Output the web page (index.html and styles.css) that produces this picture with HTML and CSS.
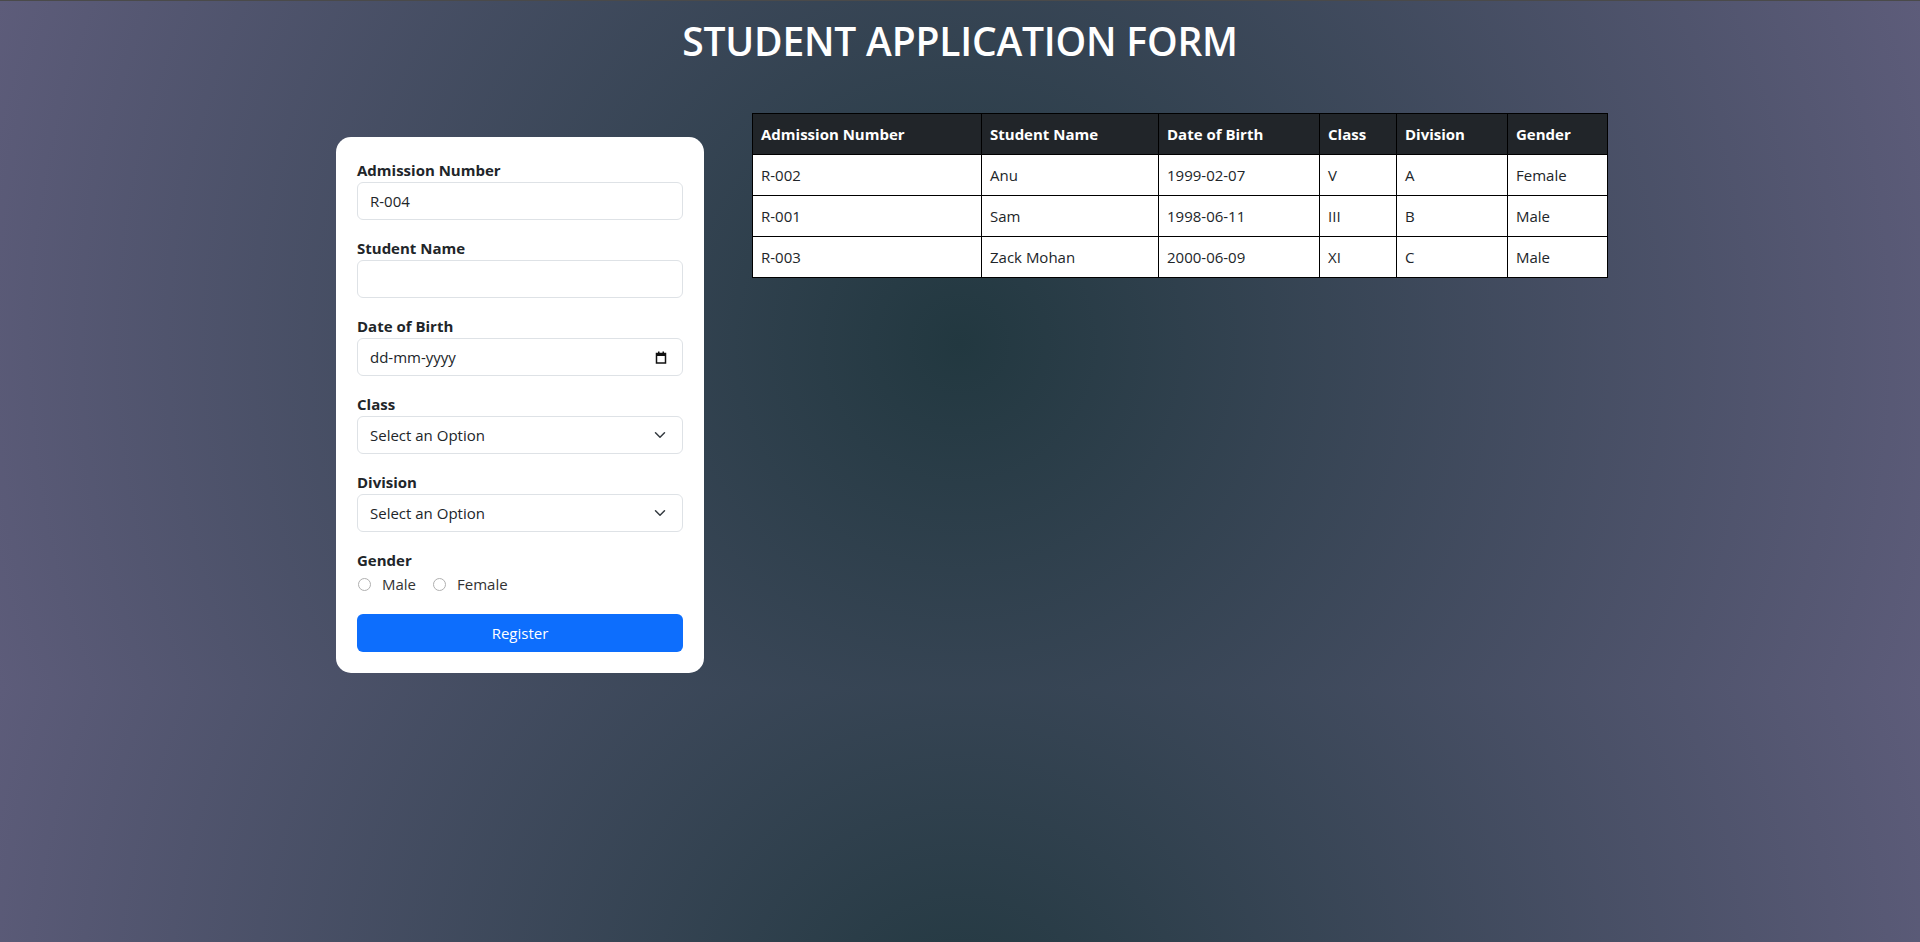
FILE: index.html
```html
<!DOCTYPE html>
<html lang="en">
<head>
<meta charset="utf-8">
<title>Student Application Form</title>
<link rel="stylesheet" href="styles.css">
</head>
<body>
<div class="topline"></div>
<h1 class="title">STUDENT APPLICATION FORM</h1>
<main class="container">
  <section class="col-form">
    <form class="card">
      <div class="field">
        <label class="label">Admission Number</label>
        <div class="control">R-004</div>
      </div>
      <div class="field">
        <label class="label">Student Name</label>
        <div class="control"></div>
      </div>
      <div class="field">
        <label class="label">Date of Birth</label>
        <div class="control control-row">
          <span>dd-mm-yyyy</span>
          <svg class="cal" width="12" height="13" viewBox="0 0 12 13"><rect x="1.5" y="2.5" width="9" height="9.5" fill="none" stroke="#111" stroke-width="1.5"/><rect x="1" y="2" width="10" height="3" fill="#111"/><rect x="3" y="0.5" width="1.5" height="2" fill="#111"/><rect x="7.5" y="0.5" width="1.5" height="2" fill="#111"/></svg>
        </div>
      </div>
      <div class="field">
        <label class="label">Class</label>
        <div class="control control-row">
          <span>Select an Option</span>
          <svg class="chev" width="12" height="8" viewBox="0 0 12 8"><path d="M1.5 1.8 6 6.2l4.5-4.4" fill="none" stroke="#343a40" stroke-width="1.5" stroke-linecap="round" stroke-linejoin="round"/></svg>
        </div>
      </div>
      <div class="field">
        <label class="label">Division</label>
        <div class="control control-row">
          <span>Select an Option</span>
          <svg class="chev" width="12" height="8" viewBox="0 0 12 8"><path d="M1.5 1.8 6 6.2l4.5-4.4" fill="none" stroke="#343a40" stroke-width="1.5" stroke-linecap="round" stroke-linejoin="round"/></svg>
        </div>
      </div>
      <div class="field field-gender">
        <label class="label">Gender</label>
        <div class="radios">
          <span class="radio"><span class="dot"></span>Male</span>
          <span class="radio"><span class="dot"></span>Female</span>
        </div>
      </div>
      <div class="btn">Register</div>
    </form>
  </section>
  <section class="col-table">
    <table class="table">
      <colgroup>
        <col class="c1"><col class="c2"><col class="c3"><col class="c4"><col class="c5"><col class="c6">
      </colgroup>
      <thead>
        <tr><th>Admission Number</th><th>Student Name</th><th>Date of Birth</th><th>Class</th><th>Division</th><th>Gender</th></tr>
      </thead>
      <tbody>
        <tr><td>R-002</td><td>Anu</td><td>1999-02-07</td><td>V</td><td>A</td><td>Female</td></tr>
        <tr><td>R-001</td><td>Sam</td><td>1998-06-11</td><td>III</td><td>B</td><td>Male</td></tr>
        <tr><td>R-003</td><td>Zack Mohan</td><td>2000-06-09</td><td>XI</td><td>C</td><td>Male</td></tr>
      </tbody>
    </table>
  </section>
</main>
</body>
</html>
```
FILE: styles.css
```css
html, body {
  margin: 0;
  padding: 0;
}
body {
  min-height: 100vh;
  font-family: "Open Sans", "Noto Sans", sans-serif;
  font-size: 15px;
  line-height: 24px;
  color: #212529;
  background-color: #3a4455;
  background-image: radial-gradient(circle farthest-corner at 50% 50%, #223840 0%, #5d5c7a 100%);
  background-size: 100% 688px;
  background-repeat: repeat;
}
.topline {
  height: 1px;
  background: #4a4a4a;
}
.title {
  margin: 16px 0 48px;
  text-align: center;
  color: #fff;
  font-size: 39px;
  line-height: 48px;
  font-weight: 600;
  letter-spacing: -0.2px;
}
.container {
  width: 1296px;
  margin: 0 auto;
  display: flex;
  gap: 24px;
  align-items: flex-start;
}
.col-form {
  width: 416px;
  flex: none;
}
.card {
  margin: 24px 24px 0;
  background: #fff;
  border-radius: 15px;
  padding: 21px;
}
.field {
  margin-bottom: 16px;
}
.field-gender {
  margin-bottom: 18px;
}
.label {
  display: block;
  font-weight: 700;
  height: 24px;
}
.control {
  box-sizing: border-box;
  height: 38px;
  border: 1px solid #dee2e6;
  border-radius: 6px;
  padding: 6px 12px;
  background: #fff;
}
.control-row {
  display: flex;
  align-items: center;
  justify-content: space-between;
}
.cal {
  margin-right: 3px;
}
.chev {
  margin-right: 4px;
}
.radios {
  display: flex;
  gap: 16px;
  height: 24px;
  align-items: center;
  color: #333;
}
.radio {
  display: flex;
  align-items: center;
  gap: 11px;
  margin-left: 1px;
}
.dot {
  box-sizing: border-box;
  width: 13px;
  height: 13px;
  border-radius: 50%;
  border: 1px solid #b0b0b0;
  background: #fff;
}
.btn {
  height: 38px;
  border-radius: 6px;
  background: #0d6efd;
  color: #fff;
  text-align: center;
  line-height: 38px;
}
.col-table {
  width: 856px;
  flex: none;
}
.table {
  width: 855px;
  table-layout: fixed;
  border-collapse: collapse;
  background: #fff;
}
.table th, .table td {
  border: 1px solid #000;
  padding: 8px;
  text-align: left;
  height: 24px;
  white-space: nowrap;
}
.table th {
  background: #212529;
  color: #fff;
  font-weight: 700;
}
.c1 { width: 229px; }
.c2 { width: 177px; }
.c3 { width: 161px; }
.c4 { width: 77px; }
.c5 { width: 111px; }
.c6 { width: 100px; }
```
